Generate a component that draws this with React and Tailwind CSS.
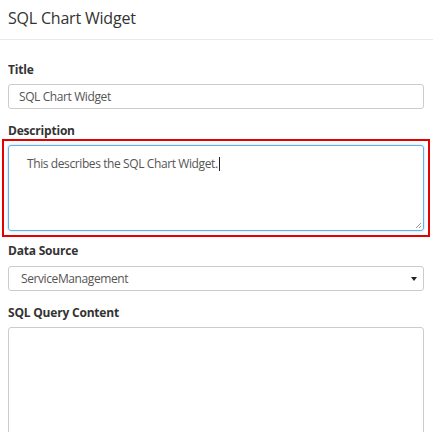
const font = { fontFamily: '"Open Sans", "Noto Sans", sans-serif' };

function Label({ children, className = "" }) {
  return (
    <div className={`text-[12px] font-bold leading-[17px] tracking-[-0.2px] text-[#333] ${className}`}>
      {children}
    </div>
  );
}

export default function App() {
  return (
    <div className="h-[432px] w-[433px] overflow-hidden bg-white" style={font}>
      <div className="flex h-[40px] items-center border-b border-[#e8e8e8] px-2 pb-[4px]">
        <h1 className="text-[16px] leading-none tracking-[-0.2px] text-[#333]">SQL Chart Widget</h1>
      </div>

      <div className="px-[8px] pt-[21px] pr-[9px]">
        <Label className="mb-[6px]">Title</Label>
        <div className="flex h-[25px] items-center rounded-[3px] border border-[#ccc] px-[10px] text-[12px] tracking-[-0.4px] text-[#555]">
          SQL Chart Widget
        </div>

        <Label className="mt-[13px]">Description</Label>
        <div className="-mx-[6px] border-2 border-[#e60000] p-[4px]">
          <div className="relative h-[86px] rounded-[3px] border border-[#66afe9] px-[18px] pt-[8px] text-[12px] leading-[18px] tracking-[-0.4px] text-[#555] shadow-[0_0_3px_rgba(102,175,233,0.5)]">
            This describes the SQL Chart Widget.
            <span className="ml-[1px] inline-block h-[14px] w-px translate-y-[3px] bg-[#222]" />
            <svg className="absolute bottom-[1px] right-[1px]" width="7" height="7" viewBox="0 0 7 7">
              <path d="M6 1 L1 6 M6 4 L4 6" stroke="#999" strokeWidth="1" />
            </svg>
          </div>
        </div>

        <Label className="mt-[5px] mb-[7px]">Data Source</Label>
        <div className="flex h-[25px] items-center justify-between rounded-[3px] border border-[#ccc] pl-[12px] pr-[6px] text-[12px] tracking-[-0.4px] text-[#555]">
          <span>ServiceManagement</span>
          <svg width="6" height="4" viewBox="0 0 6 4">
            <path d="M0 0 L6 0 L3 4 Z" fill="#222" />
          </svg>
        </div>

        <Label className="mt-[13px] mb-[6px]">SQL Query Content</Label>
        <div className="h-[140px] rounded-[3px] border border-[#ccc]" />
      </div>
    </div>
  );
}
